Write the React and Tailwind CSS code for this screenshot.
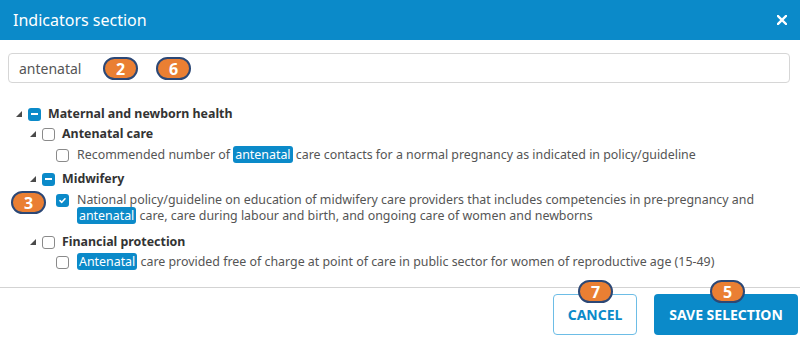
import React from "react";

// Small filled corner triangle used by the tree expanders
function Arrow() {
  return (
    <span className="w-[14px] flex items-center">
      <svg width="6" height="6" viewBox="0 0 6 6" className="ml-[2px]">
        <polygon points="6,0 6,6 0,6" fill="#4a4a4a" />
      </svg>
    </span>
  );
}

function Box({ state }) {
  if (state === "partial") {
    return (
      <span className="w-[13px] h-[13px] rounded-[3px] bg-[#0b8ac9] flex items-center justify-center shrink-0">
        <span className="w-[7px] h-[2px] bg-white" />
      </span>
    );
  }
  if (state === "checked") {
    return (
      <span className="w-[13px] h-[13px] rounded-[3px] bg-[#0b8ac9] flex items-center justify-center shrink-0">
        <svg width="9" height="9" viewBox="0 0 9 9">
          <path d="M2 4.6 L3.8 6.3 L7 2.8" stroke="white" strokeWidth="1.6" fill="none" strokeLinecap="round" strokeLinejoin="round" />
        </svg>
      </span>
    );
  }
  return <span className="w-[13px] h-[13px] rounded-[3px] border border-[#8a8a8a] bg-white shrink-0" />;
}

function Hit({ children }) {
  return <span className="bg-[#0b8ac9] text-white rounded-[3px] px-[2px]">{children}</span>;
}

function Badge({ n, className }) {
  return (
    <div
      className={
        "absolute w-[35px] h-[23px] rounded-full bg-[#ea7f33] border-2 border-[#2c4876] flex items-center justify-center text-white font-bold text-[16px] leading-none " +
        className
      }
    >
      {n}
    </div>
  );
}

export default function App() {
  return (
    <div className="relative w-[800px] h-[340px] bg-white overflow-hidden flex flex-col font-['Noto_Sans',sans-serif]">
      {/* Header */}
      <div className="h-10 shrink-0 bg-[#0b8ac9] flex items-center justify-between pl-[13px] pr-[13px]">
        <span className="text-white text-[16px]">Indicators section</span>
        <svg width="10" height="10" viewBox="0 0 10 10">
          <path d="M1 1 L9 9 M9 1 L1 9" stroke="white" strokeWidth="2.4" strokeLinecap="square" />
        </svg>
      </div>

      {/* Body */}
      <div className="flex-1 px-2 pt-[13px]">
        <div className="w-[782px] h-[30px] border border-[#d6d6d6] rounded-[4px] flex items-center pl-[10px] text-[14px] text-[#555]">
          antenatal
        </div>

        <div className="mt-[21px] pl-[6px] text-[12.4px]">
          <div className="flex items-center h-5">
            <Arrow />
            <Box state="partial" />
            <span className="ml-[7px] font-bold text-[#333]">Maternal and newborn health</span>
          </div>

          <div className="flex items-center h-5 pl-[14px]">
            <Arrow />
            <Box />
            <span className="ml-[7px] font-bold text-[#333]">Antenatal care</span>
          </div>
          <div className="flex items-center h-[22px] pl-[42px]">
            <Box />
            <span className="ml-[8px] text-[#555]">
              Recommended number of <Hit>antenatal</Hit> care contacts for a normal pregnancy as indicated in policy/guideline
            </span>
          </div>

          <div className="flex items-center h-5 mt-[3px] pl-[14px]">
            <Arrow />
            <Box state="partial" />
            <span className="ml-[7px] font-bold text-[#333]">Midwifery</span>
          </div>
          <div className="flex items-start pl-[42px] pt-[3px]">
            <span className="mt-[2px]">
              <Box state="checked" />
            </span>
            <span className="ml-[8px] text-[#555] leading-[16px]">
              National policy/guideline on education of midwifery care providers that includes competencies in pre-pregnancy and
              <br />
              <Hit>antenatal</Hit> care, care during labour and birth, and ongoing care of women and newborns
            </span>
          </div>

          <div className="flex items-center h-5 mt-[8px] pl-[14px]">
            <Arrow />
            <Box />
            <span className="ml-[7px] font-bold text-[#333]">Financial protection</span>
          </div>
          <div className="flex items-center h-5 pl-[42px]">
            <Box />
            <span className="ml-[8px] text-[#555]">
              <Hit>Antenatal</Hit> care provided free of charge at point of care in public sector for women of reproductive age (15-49)
            </span>
          </div>
        </div>
      </div>

      {/* Footer */}
      <div className="h-[53px] shrink-0 border-t border-[#d3d3d3] flex justify-end items-start pt-[6px] pr-[2px] gap-[17px]">
        <button className="w-[84px] h-[41px] rounded-[4px] border border-[#6dbde6] text-[#0b8ac9] font-bold text-[14px]">
          CANCEL
        </button>
        <button className="w-[144px] h-[41px] rounded-[4px] bg-[#0b8ac9] text-white font-bold text-[14px]">
          SAVE SELECTION
        </button>
      </div>

      {/* Annotation markers */}
      <Badge n="2" className="left-[103px] top-[57px]" />
      <Badge n="6" className="left-[156px] top-[57px]" />
      <Badge n="3" className="left-[11px] top-[191px]" />
      <Badge n="7" className="left-[578px] top-[280px]" />
      <Badge n="5" className="left-[710px] top-[280px]" />
    </div>
  );
}
